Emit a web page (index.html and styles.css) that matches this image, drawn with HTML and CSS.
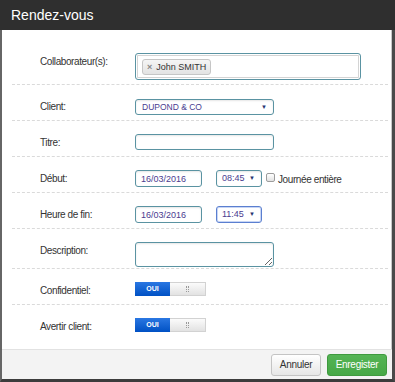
FILE: index.html
```html
<!DOCTYPE html>
<html lang="fr">
<head>
  <meta charset="UTF-8">
  <title>Rendez-vous</title>
  <link rel="stylesheet" href="styles.css">
</head>
<body>
  <div class="modal">
    <div class="modal-header">Rendez-vous</div>

    <div class="modal-main">
      <div class="form">
        <!-- collaborateurs -->
        <div class="row row-collab">
          <div class="label">Collaborateur(s):</div>
          <div class="field collab">
            <span class="tag"><span class="tag-x">&times;</span>John SMITH</span>
          </div>
        </div>

        <div class="row">
          <div class="label">Client:</div>
          <div class="field select select-client">DUPOND &amp; CO<span class="arrow">&#9660;</span></div>
        </div>

        <div class="row">
          <div class="label">Titre:</div>
          <input type="text" class="field text-wide">
        </div>

        <div class="row">
          <div class="label">Début:</div>
          <input type="text" class="field date" value="16/03/2016">
          <div class="field select time">08:45<span class="arrow">&#9660;</span></div>
          <span class="check"></span>
          <span class="check-label">Journée entière</span>
        </div>

        <div class="row">
          <div class="label">Heure de fin:</div>
          <input type="text" class="field date" value="16/03/2016">
          <div class="field select time focus">11:45<span class="arrow">&#9660;</span></div>
        </div>

        <div class="row row-desc">
          <div class="label">Description:</div>
          <textarea class="field area"></textarea>
        </div>

        <div class="row">
          <div class="label">Confidentiel:</div>
          <div class="switch"><span class="on">OUI</span><span class="off"><i class="grip"></i></span></div>
        </div>

        <div class="row">
          <div class="label">Avertir client:</div>
          <div class="switch"><span class="on">OUI</span><span class="off"><i class="grip"></i></span></div>
        </div>
      </div>

      <!-- boutons -->
      <div class="footer">
        <button class="btn btn-cancel">Annuler</button>
        <button class="btn btn-save">Enregister</button>
      </div>
    </div>
  </div>
</body>
</html>
```

FILE: styles.css
```css
body {
  margin: 0;
  font-family: "Liberation Sans", Arial, sans-serif;
  background: #fff;
}
.modal {
  width: 395px;
  height: 382px;
  display: flex;
  flex-direction: column;
}
.modal-header {
  height: 30px;
  background: #2f2f2f;
  color: #fff;
  font-size: 14px;
  line-height: 30px;
  padding-left: 11px;
}
.modal-main {
  flex: 1;
  display: flex;
  flex-direction: column;
  border-style: solid;
  border-color: #5c5c5c #4a4a4a #3c3c3c #666;
  border-width: 0 3px 3px 2px;
}
.form {
  flex: 1;
  padding: 0 4px 0 10px;
  background: #fff;
  box-shadow: inset -1px 0 #c8c8c8;
}
.row {
  display: flex;
  align-items: flex-start;
  padding-top: 13px;
  height: 22px;
  border-bottom: 1px dashed #dadada;
}
.row-collab {
  padding-top: 23px;
  height: 31px;
}
.row-desc {
  height: 26px;
}
.row:last-child {
  border-bottom: none;
}
.label {
  width: 95px;
  margin-left: 28px;
  padding-top: 2px;
  font-size: 10px;
  letter-spacing: -0.4px;
  line-height: 13px;
  color: #333;
}
.field {
  box-sizing: border-box;
  height: 16px;
  margin: 0;
  padding: 0 5px;
  border: 1px solid #5a93a2;
  border-radius: 3px;
  background: #fff;
  box-shadow: inset 0 1px 2px rgba(0, 0, 0, 0.1);
  font-family: "Liberation Sans", Arial, sans-serif;
  font-size: 9px;
  line-height: 14px;
  color: #4a3c8f;
  outline: none;
}
.collab {
  width: 226px;
  height: 27px;
  padding: 5px 6px;
  box-shadow: inset 0 0 0 1px #fff, inset 0 0 0 2px #d4d4d4;
}
.tag {
  display: inline-flex;
  align-items: center;
  box-sizing: border-box;
  height: 16px;
  padding: 0 4px;
  border: 1px solid #c6c6c6;
  border-radius: 3px;
  background: linear-gradient(#f5f5f5, #e3e3e3);
  font-size: 9px;
  color: #333;
  white-space: nowrap;
}
.tag-x {
  font-size: 9px;
  font-weight: bold;
  color: #888;
  margin-right: 4px;
}
.select {
  position: relative;
}
.select-client {
  width: 139px;
  margin-top: 1px;
  font-size: 8.5px;
  line-height: 14px;
  padding-left: 6px;
}
.arrow {
  position: absolute;
  right: 6px;
  top: 0;
  font-size: 6px;
  color: #27366f;
}
.text-wide {
  width: 139px;
}
.date {
  width: 67px;
  height: 17px;
}
.time {
  width: 46px;
  height: 17px;
  margin-left: 14px;
  line-height: 15px;
}
.time.focus {
  border-color: #5b7fd0;
  box-shadow: inset 0 0 0 1px #c8d6f5;
}
.check {
  box-sizing: border-box;
  width: 9px;
  height: 9px;
  margin: 3px 0 0 4px;
  border: 1px solid #9c9c9c;
  border-radius: 2px;
  background: linear-gradient(#fff, #e2e2e2);
}
.check-label {
  margin-left: 3px;
  padding-top: 3px;
  font-size: 10px;
  letter-spacing: -0.4px;
  line-height: 13px;
  color: #333;
}
.area {
  width: 139px;
  height: 25px;
  resize: both;
}
.switch {
  display: flex;
  width: 71px;
  height: 14px;
}
.on {
  width: 35px;
  background: linear-gradient(#2a77e2, #0051c4);
  color: #fff;
  font-size: 7px;
  font-weight: bold;
  line-height: 14px;
  text-align: center;
}
.off {
  flex: 1;
  display: flex;
  align-items: center;
  justify-content: center;
  box-sizing: border-box;
  border: 1px solid #d2d2d2;
  border-left: none;
  background: linear-gradient(#fbfbfb, #e2e2e2);
}
.grip {
  width: 1px;
  height: 6px;
  border-left: 1px dotted #9a9a9a;
  border-right: 1px dotted #9a9a9a;
}
.footer {
  height: 29px;
  display: flex;
  align-items: center;
  justify-content: flex-end;
  gap: 6px;
  padding-right: 5px;
  border-top: 1px solid #e2e2e2;
  background: #f3f3f3;
}
.btn {
  height: 22px;
  padding: 0;
  border-radius: 3px;
  font-family: "Liberation Sans", Arial, sans-serif;
  font-size: 10px;
  letter-spacing: -0.3px;
  cursor: pointer;
}
.btn-cancel {
  width: 50px;
  border: 1px solid #c4c4c4;
  background: linear-gradient(#fff, #e6e6e6);
  color: #333;
}
.btn-save {
  width: 60px;
  border: 1px solid #3f9a3f;
  background: linear-gradient(#55b455, #46a846);
  color: #fff;
}
```
